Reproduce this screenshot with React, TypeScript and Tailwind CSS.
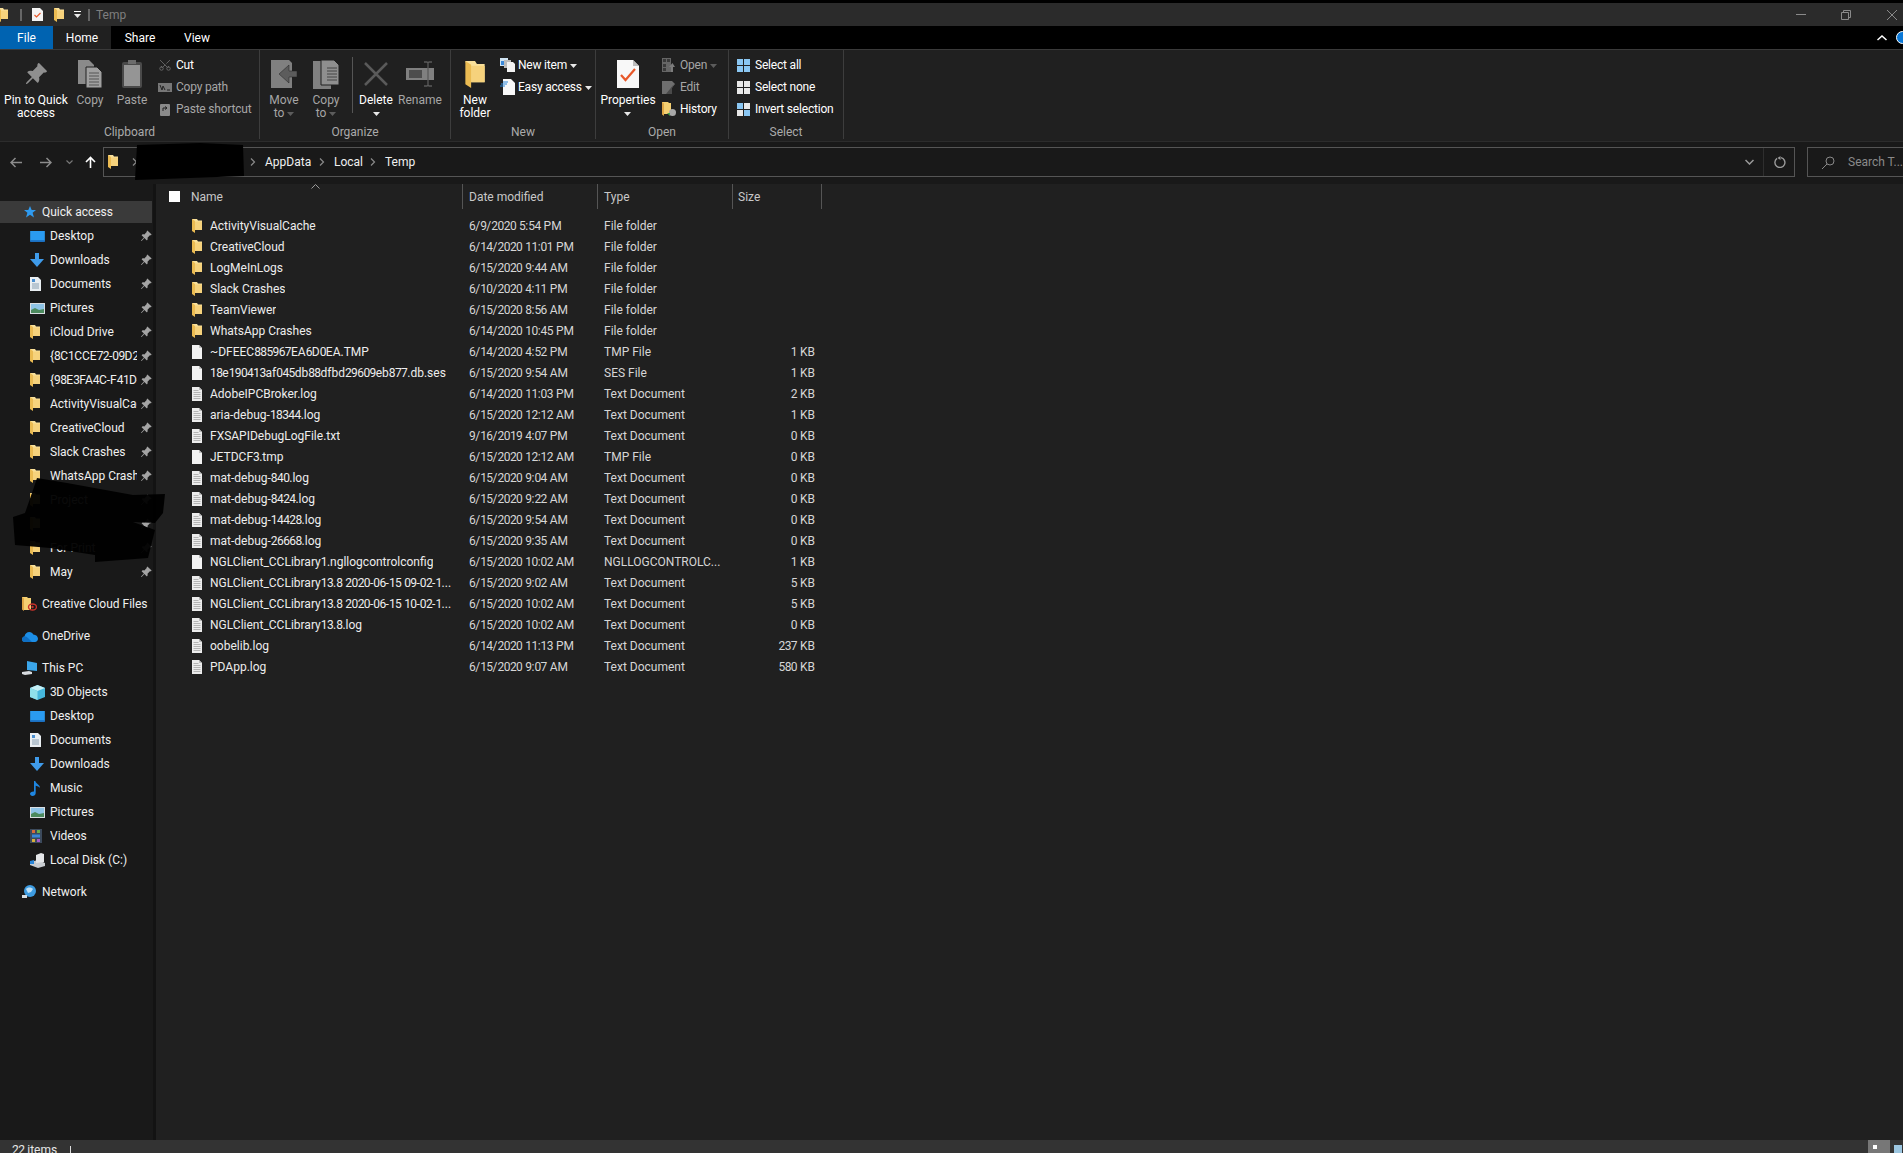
import React from "react";
import { BsPinAngleFill } from "react-icons/bs";
import { Scissors } from "lucide-react";

type FileRow = {
  name: string;
  date: string;
  type: string;
  size?: string;
  kind: "folder" | "blank" | "text";
};

const files: FileRow[] = [
  { name: "ActivityVisualCache", date: "6/9/2020 5:54 PM", type: "File folder", kind: "folder" },
  { name: "CreativeCloud", date: "6/14/2020 11:01 PM", type: "File folder", kind: "folder" },
  { name: "LogMeInLogs", date: "6/15/2020 9:44 AM", type: "File folder", kind: "folder" },
  { name: "Slack Crashes", date: "6/10/2020 4:11 PM", type: "File folder", kind: "folder" },
  { name: "TeamViewer", date: "6/15/2020 8:56 AM", type: "File folder", kind: "folder" },
  { name: "WhatsApp Crashes", date: "6/14/2020 10:45 PM", type: "File folder", kind: "folder" },
  { name: "~DFEEC885967EA6D0EA.TMP", date: "6/14/2020 4:52 PM", type: "TMP File", size: "1 KB", kind: "blank" },
  { name: "18e190413af045db88dfbd29609eb877.db.ses", date: "6/15/2020 9:54 AM", type: "SES File", size: "1 KB", kind: "blank" },
  { name: "AdobeIPCBroker.log", date: "6/14/2020 11:03 PM", type: "Text Document", size: "2 KB", kind: "text" },
  { name: "aria-debug-18344.log", date: "6/15/2020 12:12 AM", type: "Text Document", size: "1 KB", kind: "text" },
  { name: "FXSAPIDebugLogFile.txt", date: "9/16/2019 4:07 PM", type: "Text Document", size: "0 KB", kind: "text" },
  { name: "JETDCF3.tmp", date: "6/15/2020 12:12 AM", type: "TMP File", size: "0 KB", kind: "blank" },
  { name: "mat-debug-840.log", date: "6/15/2020 9:04 AM", type: "Text Document", size: "0 KB", kind: "text" },
  { name: "mat-debug-8424.log", date: "6/15/2020 9:22 AM", type: "Text Document", size: "0 KB", kind: "text" },
  { name: "mat-debug-14428.log", date: "6/15/2020 9:54 AM", type: "Text Document", size: "0 KB", kind: "text" },
  { name: "mat-debug-26668.log", date: "6/15/2020 9:35 AM", type: "Text Document", size: "0 KB", kind: "text" },
  { name: "NGLClient_CCLibrary1.ngllogcontrolconfig", date: "6/15/2020 10:02 AM", type: "NGLLOGCONTROLC...", size: "1 KB", kind: "blank" },
  { name: "NGLClient_CCLibrary13.8 2020-06-15 09-02-1...", date: "6/15/2020 9:02 AM", type: "Text Document", size: "5 KB", kind: "text" },
  { name: "NGLClient_CCLibrary13.8 2020-06-15 10-02-1...", date: "6/15/2020 10:02 AM", type: "Text Document", size: "5 KB", kind: "text" },
  { name: "NGLClient_CCLibrary13.8.log", date: "6/15/2020 10:02 AM", type: "Text Document", size: "0 KB", kind: "text" },
  { name: "oobelib.log", date: "6/14/2020 11:13 PM", type: "Text Document", size: "237 KB", kind: "text" },
  { name: "PDApp.log", date: "6/15/2020 9:07 AM", type: "Text Document", size: "580 KB", kind: "text" },
];

// digits in the screenshot sit on a 6px grid, Roboto's are wider
const Digits = ({ text, spacing = "tracking-[-0.6px]" }: { text: string; spacing?: string }) => (
  <>
    {text.split(/(\d+)/).map((part, i) =>
      i % 2 === 1 ? (
        <span key={i} className={spacing}>
          {part}
        </span>
      ) : (
        part
      ),
    )}
  </>
);

const Folder = ({ className = "w-[10px] h-[14px]" }: { className?: string }) => (
  <svg viewBox="0 0 10 14" className={className}>
    <path d="M0 0h5l1 1.500h4V11H3z" fill="#f9e09a" />
    <path d="M3 2.500h7V11H3z" fill="#f6d27c" />
    <path d="M0 0l3 2v12l-3-2z" fill="#ebbb52" />
  </svg>
);

const BlankDoc = () => (
  <svg viewBox="0 0 10 14" className="w-[10px] h-[14px]">
    <path d="M0 0H7L10 3V14H0z" fill="#f2f2f2" />
    <path d="M7 0V3H10z" fill="#c4c4c4" />
  </svg>
);

const TextDoc = () => (
  <svg viewBox="0 0 10 14" className="w-[10px] h-[14px]">
    <path d="M0 0H7L10 3V14H0z" fill="#ececec" />
    <path d="M7 0V3H10z" fill="#bdbdbd" />
    <path d="M1.500 3.500h5M1.500 5.500h7M1.500 7.500h7M1.500 9.500h7M1.500 11.500h7" stroke="#a6a6a6" strokeWidth="0.800" />
  </svg>
);

const Chevron = () => (
  <svg viewBox="0 0 6 8" className="w-[6px] h-[8px]">
    <path d="M1 0.500L4.500 4L1 7.500" fill="none" stroke="#8a8a8a" strokeWidth="1.200" />
  </svg>
);

const Caret = ({ dim = false }: { dim?: boolean }) => (
  <svg viewBox="0 0 7 4" className="w-[7px] h-[4px] inline-block">
    <path d="M0 0h7L3.500 4z" fill={dim ? "#5c5c5c" : "#e8e8e8"} />
  </svg>
);

const Pin = () => <BsPinAngleFill className="w-[12px] h-[12px] text-[#a4a4a4]" />;

const DesktopIcon = () => (
  <svg viewBox="0 0 16 12" className="w-[15px] h-[11px]">
    <rect width="16" height="11" fill="#2a9bf0" />
    <rect y="10" width="16" height="2" fill="#1b6fc0" />
  </svg>
);
const DownloadIcon = () => (
  <svg viewBox="0 0 14 14" className="w-[14px] h-[14px]">
    <path d="M5 0h4v6h5l-7 8-7-8h5z" fill="#3f9bea" />
  </svg>
);
const DocumentsIcon = () => (
  <svg viewBox="0 0 11 14" className="w-[11px] h-[14px]">
    <path d="M0 0H8L11 3V14H0z" fill="#e9eef2" />
    <path d="M2 2h3v3H2z" fill="#4a8fd0" />
    <path d="M2 7h7M2 9h7M2 11h7" stroke="#8aa0b2" />
  </svg>
);
const PicturesIcon = () => (
  <svg viewBox="0 0 15 11" className="w-[15px] h-[11px]">
    <rect width="15" height="11" fill="#d9dee2" />
    <rect x="1" y="1" width="13" height="9" fill="#8ec3e6" />
    <path d="M1 7l4-2 4 2 5-1v4H1z" fill="#4c8a5e" />
  </svg>
);
const StarIcon = () => (
  <svg viewBox="0 0 12 12" className="ml-[2px] w-[12px] h-[12px]">
    <path d="M6 0l1.700 4H12L8.600 6.800 10 11.500 6 8.800 2 11.500l1.400-4.700L0 4h4.300z" fill="#2f9bf0" />
  </svg>
);
const CubeIcon = () => (
  <svg viewBox="0 0 15 15" className="w-[15px] h-[15px]">
    <path d="M7.500 0L15 3v9l-7.500 3L0 12V3z" fill="#46b7dc" />
    <path d="M7.500 0L15 3 7.500 6 0 3z" fill="#c6f0f6" />
    <path d="M0 3l7.500 3v9L0 12z" fill="#8fe0ea" />
  </svg>
);
const MusicIcon = () => (
  <svg viewBox="0 0 11 15" className="w-[11px] h-[15px]">
    <path d="M4 0h1.300c.5 3 4.700 3.500 4.700 7-1-1.500-3-2-4.300-2.300V12c0 1.700-1.500 3-3.200 3C1 15 0 14 0 12.800 0 11.300 1.700 10.300 4 10.500z" fill="#1f86e0" />
  </svg>
);
const VideosIcon = () => (
  <svg viewBox="0 0 12 14" className="w-[12px] h-[14px]">
    <rect width="12" height="14" fill="#3c4a5c" />
    <rect x="2" y="1" width="3" height="3" fill="#d86a3a" />
    <rect x="7" y="1" width="3" height="3" fill="#6ab04a" />
    <rect x="2" y="5.500" width="8" height="3" fill="#3a88d8" />
    <rect x="2" y="10" width="3" height="3" fill="#d8b03a" />
    <rect x="7" y="10" width="3" height="3" fill="#a85ac8" />
  </svg>
);
const DiskIcon = () => (
  <svg viewBox="0 0 15 15" className="w-[15px] h-[15px]">
    <path d="M0 9l8-2 7 3v3l-7 2-8-3z" fill="#c8ccd0" />
    <path d="M6 2l5-2 3 1v8l-8 1z" fill="#e4e6e8" />
    <path d="M0 8l4-1v4H0z" fill="#2a86d8" />
  </svg>
);
const CloudIcon = () => (
  <svg viewBox="0 0 16 11" className="w-[16px] h-[11px]">
    <path d="M3 11C1 11 0 9.700 0 8.300 0 6.800 1 5.700 2.500 5.500 3 2.500 5 1 7.300 1c1.800 0 3.300 1 4 2.500C14 3.600 16 5.500 16 7.800 16 9.700 14.600 11 13 11z" fill="#1c8ee6" />
    <path d="M3 11C1 11 0 9.700 0 8.300 0 6.800 1 5.700 2.500 5.500 4 5.200 5 6 6 7l4 4z" fill="#0f6fc4" />
  </svg>
);
const PcIcon = () => (
  <svg viewBox="0 0 16 14" className="w-[16px] h-[14px]">
    <path d="M5 0l10 2v8l-10-1z" fill="#3ba6ea" />
    <path d="M0 11l7-1 3 1v2l-7 1-3-1z" fill="#d8dce0" />
  </svg>
);
const NetworkIcon = () => (
  <svg viewBox="0 0 14 14" className="w-[14px] h-[14px]">
    <circle cx="8" cy="6" r="6" fill="#3d9be0" />
    <path d="M4 4c2-2 5-2 7 0l-2 3-3 1z" fill="#bfe0f6" />
    <path d="M0 10h5v3H0z" fill="#d8dce0" />
  </svg>
);
const CcIcon = () => (
  <svg viewBox="0 0 15 14" className="w-[15px] h-[14px]">
    <path d="M0 0h5l1 1h3v12H2l-2-1z" fill="#f4cf72" />
    <path d="M0 0l2 1.500V14l-2-1.500z" fill="#dfa645" />
    <ellipse cx="10.500" cy="10" rx="4" ry="3" fill="none" stroke="#c8322a" strokeWidth="1.400" />
    <circle cx="10.500" cy="10" r="1.200" fill="#c8322a" />
  </svg>
);

type NavRow = { label: string; icon: React.ReactNode; pinned?: boolean };

const quick: NavRow[] = [
  { label: "Desktop", icon: <DesktopIcon />, pinned: true },
  { label: "Downloads", icon: <DownloadIcon />, pinned: true },
  { label: "Documents", icon: <DocumentsIcon />, pinned: true },
  { label: "Pictures", icon: <PicturesIcon />, pinned: true },
  { label: "iCloud Drive", icon: <Folder />, pinned: true },
  { label: "{8C1CCE72-09D2-4F", icon: <Folder />, pinned: true },
  { label: "{98E3FA4C-F41D-4A", icon: <Folder />, pinned: true },
  { label: "ActivityVisualCache", icon: <Folder />, pinned: true },
  { label: "CreativeCloud", icon: <Folder />, pinned: true },
  { label: "Slack Crashes", icon: <Folder />, pinned: true },
  { label: "WhatsApp Crashes", icon: <Folder />, pinned: true },
  { label: "Project", icon: <Folder />, pinned: true },
  { label: "", icon: <Folder />, pinned: true },
  { label: "For Print", icon: <Folder />, pinned: true },
  { label: "May", icon: <Folder />, pinned: true },
];

const pcItems: NavRow[] = [
  { label: "3D Objects", icon: <CubeIcon /> },
  { label: "Desktop", icon: <DesktopIcon /> },
  { label: "Documents", icon: <DocumentsIcon /> },
  { label: "Downloads", icon: <DownloadIcon /> },
  { label: "Music", icon: <MusicIcon /> },
  { label: "Pictures", icon: <PicturesIcon /> },
  { label: "Videos", icon: <VideosIcon /> },
  { label: "Local Disk (C:)", icon: <DiskIcon /> },
];

const ChildRow = ({ row }: { row: NavRow }) => (
  <div className="flex h-6 items-center pl-[30px]">
    <span className="flex w-[20px] shrink-0 items-center justify-start">{row.icon}</span>
    <span className={`overflow-hidden whitespace-nowrap text-[#f0f0f0] ${row.pinned ? "w-[87px]" : "w-[95px]"}`}>
      <Digits text={row.label} />
    </span>
    {row.pinned && <span className="ml-[3px]"><Pin /></span>}
  </div>
);

const RootRow = ({ icon, label, active }: { icon: React.ReactNode; label: string; active?: boolean }) => (
  <div className="flex h-6 items-center">
    <div className={`flex h-[22px] w-[152px] items-center pl-[22px] ${active ? "bg-[#3a3a3a]" : ""}`}>
      <span className="flex w-[20px] shrink-0 items-center">{icon}</span>
      <span className="whitespace-nowrap text-[#f0f0f0]">{label}</span>
    </div>
  </div>
);

const BigButton = ({
  width,
  icon,
  lines,
  dim,
  caret,
}: {
  width: string;
  icon: React.ReactNode;
  lines: React.ReactNode[];
  dim?: boolean;
  caret?: boolean;
}) => (
  <div className={`flex flex-col items-center ${width}`}>
    <div className="flex h-[40px] items-center justify-center">{icon}</div>
    <div className={`flex flex-col items-center whitespace-nowrap leading-[13px] ${dim ? "text-[#a6a6a6]" : "text-white"}`}>
      {lines.map((l, i) => (
        <span key={i} className="h-[13px]">
          {l}
        </span>
      ))}
      {caret && (
        <span className="flex h-[13px] items-center">
          <Caret />
        </span>
      )}
    </div>
  </div>
);

const SmallItem = ({ icon, label, dim }: { icon: React.ReactNode; label: React.ReactNode; dim?: boolean }) => (
  <div className="flex h-[22px] items-center">
    <span className="flex w-[18px] shrink-0 items-center">{icon}</span>
    <span className={`whitespace-nowrap tracking-[-0.2px] ${dim ? "text-[#a6a6a6]" : "text-white"}`}>{label}</span>
  </div>
);

const Group = ({ width, label, children }: { width: string; label: string; children: React.ReactNode }) => (
  <div className={`flex h-[89px] flex-col border-r border-[#3d3d3d] pt-[4px] ${width}`}>
    <div className="flex h-[72px]">{children}</div>
    <div className="text-center leading-[14px] text-[#ababab]">{label}</div>
  </div>
);

const Tiles = ({ colors }: { colors: string[] }) => (
  <div className="grid h-[13px] w-[13px] grid-cols-2 gap-[1px]">
    {colors.map((c, i) => (
      <div key={i} className={c} />
    ))}
  </div>
);

export default function App() {
  return (
    <div className="relative flex h-[1153px] w-[1903px] flex-col overflow-hidden bg-[#202020] text-[12px] [font-family:Roboto,sans-serif]">
      {/* title bar */}
      <div className="h-[3px] bg-black" />
      <div className="flex h-[23px] items-center bg-[#2b2b2b] text-[#7f7f7f]">
        <div className="-ml-[2px] w-[22px]">
          <Folder />
        </div>
        <div className="h-[12px] w-[2px] border-x border-[#666]" />
        <div className="ml-[10px] w-[22px]">
          <svg viewBox="0 0 11 13" className="h-[13px] w-[11px]">
            <path d="M0 0H8L11 3V13H0z" fill="#f4f4f4" />
            <path d="M2.500 7l2 2 4-4" fill="none" stroke="#e8582a" strokeWidth="1.200" />
          </svg>
        </div>
        <Folder />
        <div className="ml-[7px] flex w-[12px] flex-col items-center gap-[2px]">
          <div className="h-[1px] w-[7px] bg-white" />
          <Caret />
        </div>
        <div className="ml-[5px] h-[12px] w-[2px] border-x border-[#666]" />
        <span className="ml-[6px]">Temp</span>
        <div className="ml-auto flex items-center text-[#8a8a8a]">
          <div className="mr-[35px] h-[1px] w-[10px] bg-[#8a8a8a]" />
          <svg viewBox="0 0 10 10" className="mr-[36px] h-[10px] w-[10px]" fill="none" stroke="#8a8a8a">
            <path d="M0.500 2.500h7v7h-7zM2.500 2.500v-2h7v7h-2" />
          </svg>
          <svg viewBox="0 0 10 10" className="mr-[6px] h-[10px] w-[10px]" stroke="#8a8a8a">
            <path d="M0 0l10 10M10 0L0 10" />
          </svg>
        </div>
      </div>

      {/* tabs */}
      <div className="flex h-[23px] items-stretch bg-black text-white">
        <div className="flex w-[53px] items-center justify-center bg-[#0063b1]">File</div>
        <div className="flex w-[58px] items-center justify-center bg-[#202020]">Home</div>
        <div className="flex w-[58px] items-center justify-center">Share</div>
        <div className="flex w-[56px] items-center justify-center">View</div>
        <div className="ml-auto flex items-center">
          <svg viewBox="0 0 10 6" className="mr-[9px] h-[6px] w-[10px]">
            <path d="M0.500 5L5 1l4.500 4" fill="none" stroke="#fff" strokeWidth="1.500" />
          </svg>
          <div className="-mr-[6px] h-[13px] w-[13px] rounded-full border border-white bg-[#0a78d7]" />
        </div>
      </div>

      {/* ribbon */}
      <div className="flex h-[92px] border-t border-[#3a3a3a] bg-[#202020]">
        <Group width="w-[260px]" label="Clipboard">
          <BigButton
            width="w-[72px]"
            lines={["Pin to Quick", "access"]}
            icon={<BsPinAngleFill className="h-[24px] w-[24px] text-[#8f8f8f]" />}
          />
          <BigButton
            width="w-[36px]"
            dim
            lines={["Copy"]}
            icon={
              <svg viewBox="0 0 24 28" className="h-[28px] w-[24px]">
                <path d="M0 0h11l5 5v19H0z" fill="#8a8a8a" />
                <path d="M8 7h11l5 5v16H8z" fill="#a0a0a0" stroke="#202020" />
                <path d="M11 13h10M11 16h10M11 19h10M11 22h10M11 25h10" stroke="#555" />
              </svg>
            }
          />
          <BigButton
            width="w-[48px]"
            dim
            lines={["Paste"]}
            icon={
              <svg viewBox="0 0 20 28" className="h-[28px] w-[20px]">
                <rect y="2" width="20" height="26" rx="2" fill="#4a4a4a" />
                <rect x="2" y="5" width="16" height="21" fill="#959595" />
                <rect x="6" y="0" width="8" height="4" fill="#6c6c6c" />
              </svg>
            }
          />
          <div className="ml-[2px] flex flex-col">
            <SmallItem
              dim
              icon={<Scissors className="h-[14px] w-[14px] -rotate-90 text-[#7d7d7d]" strokeWidth={1.200} />}
              label={<span className="text-white">Cut</span>}
            />
            <SmallItem
              dim
              icon={
                <svg viewBox="0 0 14 9" className="h-[9px] w-[14px]">
                  <rect width="14" height="9" fill="#777" />
                  <path d="M2 2l2 5 1-4 2 4M9 7h3" stroke="#222" fill="none" />
                </svg>
              }
              label="Copy path"
            />
            <SmallItem
              dim
              icon={
                <svg viewBox="0 0 10 13" className="ml-[2px] h-[13px] w-[10px]">
                  <rect y="1" width="10" height="12" rx="1" fill="#8a8a8a" />
                  <path d="M3 8V5h4M5 3.500L7 5 5 6.500" stroke="#222" fill="none" />
                </svg>
              }
              label="Paste shortcut"
            />
          </div>
        </Group>

        <Group width="w-[191px]" label="Organize">
          <BigButton
            width="w-[48px]"
            dim
            lines={[
              "Move",
              <span key="m">
                to <Caret dim />
              </span>,
            ]}
            icon={
              <svg viewBox="0 0 26 28" className="h-[28px] w-[26px]">
                <path d="M0 0h18l3 3v25H0z" fill="#808080" />
                <path d="M26 11v6h-8v6L8 14l10-9v6z" fill="#5c5c5c" stroke="#202020" strokeWidth="0.500" />
              </svg>
            }
          />
          <BigButton
            width="w-[36px]"
            dim
            lines={[
              "Copy",
              <span key="c">
                to <Caret dim />
              </span>,
            ]}
            icon={
              <svg viewBox="0 0 26 29" className="h-[29px] w-[26px]">
                <path d="M0 1h18v28H0z" fill="#808080" />
                <path d="M8 0h13l5 5v20H8z" fill="#8f8f8f" stroke="#202020" />
                <path d="M14 8h10M14 11h10M14 14h10M14 17h10M14 20h10" stroke="#444" />
              </svg>
            }
          />
          <div className="ml-[8px] mt-[3px] h-[56px] w-[1px] bg-[#555]" />
          <BigButton
            width="w-[46px]"
            caret
            lines={["Delete"]}
            icon={
              <svg viewBox="0 0 24 24" className="h-[24px] w-[24px]">
                <path d="M1 1l22 22M23 1L1 23" stroke="#5a5a5a" strokeWidth="2.500" />
              </svg>
            }
          />
          <BigButton
            width="w-[42px]"
            dim
            lines={["Rename"]}
            icon={
              <svg viewBox="0 0 28 26" className="h-[26px] w-[28px]">
                <rect y="7" width="28" height="12" fill="#808080" />
                <rect x="3" y="9" width="13" height="8" fill="#4d4d4d" />
                <path d="M18 1h3l1 1 1-1h3M22 2v22M18 25h3l1-1 1 1h3" stroke="#5a5a5a" fill="none" strokeWidth="1.300" />
              </svg>
            }
          />
        </Group>

        <Group width="w-[145px]" label="New">
          <BigButton
            width="w-[48px]"
            lines={["New", "folder"]}
            icon={<Folder className="h-[27px] w-[20px]" />}
          />
          <div className="ml-[1px] flex flex-col">
            <SmallItem
              icon={
                <svg viewBox="0 0 15 14" className="h-[14px] w-[15px]">
                  <rect width="8" height="8" fill="#cfe3f2" />
                  <rect x="1" y="3" width="3" height="4" fill="#3a88d8" />
                  <rect x="4" y="2" width="7" height="8" fill="#bcbcbc" />
                  <path d="M7 4h6l2 2v8H7z" fill="#f2f2f2" />
                </svg>
              }
              label={
                <span>
                  New item <Caret />
                </span>
              }
            />
            <SmallItem
              icon={
                <svg viewBox="0 0 15 16" className="h-[16px] w-[15px]">
                  <path d="M3 0h8l4 4v12H3z" fill="#f8f8f8" />
                  <path d="M3 3h5M1 5h6M0 7h5" stroke="#2a86d8" />
                </svg>
              }
              label={
                <span>
                  Easy access <Caret />
                </span>
              }
            />
          </div>
        </Group>

        <Group width="w-[133px]" label="Open">
          <BigButton
            width="w-[64px]"
            caret
            lines={["Properties"]}
            icon={
              <svg viewBox="0 0 22 28" className="h-[28px] w-[22px]">
                <path d="M0 0H16L22 6V28H0z" fill="#f8f8f8" />
                <path d="M16 0V6H22z" fill="#bdbdbd" />
                <path d="M4 15l4.500 5L18 9" fill="none" stroke="#e8582a" strokeWidth="2.200" />
              </svg>
            }
          />
          <div className="ml-[2px] flex flex-col">
            <SmallItem
              dim
              icon={
                <svg viewBox="0 0 13 14" className="h-[14px] w-[13px]">
                  <rect width="9" height="14" fill="#666" />
                  <path d="M1 1h3v3H1zM5 1h3v3H5zM1 6h3v3H1zM1 10h3v3H1z" fill="#3a3a3a" />
                  <path d="M9 14V9H7l3.500-4L13 9h-2v5z" fill="#7c7c7c" />
                </svg>
              }
              label={
                <span>
                  Open <Caret dim />
                </span>
              }
            />
            <SmallItem
              dim
              icon={
                <svg viewBox="0 0 13 13" className="h-[13px] w-[13px]">
                  <path d="M0 0H10L13 3 5 13H0z" fill="#6e6e6e" />
                  <path d="M12 3L4 13H10V7z" fill="#4a4a4a" />
                </svg>
              }
              label="Edit"
            />
            <SmallItem
              icon={
                <svg viewBox="0 0 14 14" className="h-[14px] w-[14px]">
                  <path d="M0 0h6l1 1h2v11H2l-2-1z" fill="#f4cf72" />
                  <path d="M0 0l2 1.500V14l-2-1.500z" fill="#dfa645" />
                  <circle cx="10.500" cy="10.500" r="3.500" fill="#a8a8a8" />
                  <path d="M5 11h3v3z" fill="#4aa04a" />
                </svg>
              }
              label="History"
            />
          </div>
        </Group>

        <Group width="w-[115px]" label="Select">
          <div className="ml-[8px] flex flex-col">
            <SmallItem
              icon={<Tiles colors={["bg-[#8ac6f2]", "bg-[#8ac6f2]", "bg-[#8ac6f2]", "bg-[#8ac6f2]"]} />}
              label="Select all"
            />
            <SmallItem
              icon={<Tiles colors={["bg-[#e8e8e8]", "bg-[#e8e8e8]", "bg-[#e8e8e8]", "bg-[#e8e8e8]"]} />}
              label="Select none"
            />
            <SmallItem
              icon={<Tiles colors={["bg-[#8ac6f2]", "bg-[#e8e8e8]", "bg-[#e8e8e8]", "bg-[#8ac6f2]"]} />}
              label="Invert selection"
            />
          </div>
        </Group>
      </div>

      {/* address row */}
      <div className="flex h-[43px] items-start border-t border-[#2c2c2c] bg-[#191919] pt-[5px]">
        <div className="flex h-[30px] w-[32px] shrink-0 items-center justify-center">
          <svg viewBox="0 0 12 11" className="h-[11px] w-[12px]">
            <path d="M12 5.500H1.500M5.500 1L1 5.500 5.500 10" fill="none" stroke="#8c8c8c" strokeWidth="1.500" />
          </svg>
        </div>
        <div className="flex h-[30px] w-[28px] shrink-0 items-center justify-center">
          <svg viewBox="0 0 12 11" className="h-[11px] w-[12px]">
            <path d="M0 5.500h10.500M6.500 1L11 5.500 6.500 10" fill="none" stroke="#8c8c8c" strokeWidth="1.500" />
          </svg>
        </div>
        <div className="flex h-[30px] w-[18px] shrink-0 items-center justify-center">
          <svg viewBox="0 0 7 5" className="h-[5px] w-[7px]">
            <path d="M0.500 0.500L3.500 3.500l3-3" fill="none" stroke="#777" strokeWidth="1.200" />
          </svg>
        </div>
        <div className="flex h-[30px] w-[25px] shrink-0 items-center justify-center">
          <svg viewBox="0 0 11 12" className="h-[12px] w-[11px]">
            <path d="M5.500 12V1.500M1 6l4.500-4.500L10 6" fill="none" stroke="#fff" strokeWidth="1.600" />
          </svg>
        </div>
        <div className="flex h-[30px] w-[1692px] shrink-0 items-center border border-[#555] text-[#f0f0f0]">
          <div className="ml-[4px] w-[23px]">
            <Folder />
          </div>
          <div className="flex w-[119px] items-center">
            <span className="ml-[1px]">
              <Chevron />
            </span>
          </div>
          <span className="flex w-[6px] justify-center">
            <Chevron />
          </span>
          <span className="ml-[9px] w-[51px]">AppData</span>
          <span className="flex w-[12px] justify-center">
            <Chevron />
          </span>
          <span className="ml-[6px] w-[33px]">Local</span>
          <span className="flex w-[12px] justify-center">
            <Chevron />
          </span>
          <span className="ml-[6px]">Temp</span>
          <div className="ml-auto flex h-full items-center">
            <svg viewBox="0 0 9 6" className="mr-[9px] h-[6px] w-[9px]">
              <path d="M0.500 1L4.500 5l4-4" fill="none" stroke="#9a9a9a" strokeWidth="1.500" />
            </svg>
            <div className="h-full w-[1px] bg-[#2e2e2e]" />
            <svg viewBox="0 0 12 12" className="ml-[10px] mr-[8px] h-[12px] w-[12px]">
              <path d="M7 1.600A5 5 0 1 1 3 2.400" fill="none" stroke="#9a9a9a" strokeWidth="1.400" />
              <path d="M6.500 0v4l-3-2z" fill="#9a9a9a" />
            </svg>
          </div>
        </div>
        <div className="ml-[12px] flex h-[30px] w-[120px] shrink-0 items-center border border-[#555] pl-[14px] text-[#8a8a8a]">
          <svg viewBox="0 0 13 13" className="h-[13px] w-[13px]">
            <circle cx="8" cy="5" r="4" fill="none" stroke="#888" />
            <path d="M5 8l-5 5" stroke="#888" />
          </svg>
          <span className="ml-[13px] whitespace-nowrap">Search T...</span>
        </div>
      </div>

      {/* body */}
      <div className="flex min-h-0 flex-1">
        <div className="w-[153px] shrink-0 bg-[#191919] pt-[16px]">
          <RootRow active icon={<StarIcon />} label="Quick access" />
          {quick.map((row, i) => (
            <ChildRow key={i} row={row} />
          ))}
          <div className="h-2" />
          <RootRow icon={<CcIcon />} label="Creative Cloud Files" />
          <div className="h-2" />
          <RootRow icon={<CloudIcon />} label="OneDrive" />
          <div className="h-2" />
          <RootRow icon={<PcIcon />} label="This PC" />
          {pcItems.map((row, i) => (
            <ChildRow key={i} row={row} />
          ))}
          <div className="h-2" />
          <RootRow icon={<NetworkIcon />} label="Network" />
        </div>
        <div className="w-[3px] shrink-0 bg-[#131313]" />
        <div className="min-w-0 flex-1 bg-[#202020]">
          {/* column headers */}
          <div className="relative flex h-[25px] items-stretch text-[#c8c8c8]">
            <div className="flex w-[307px] items-center border-r border-[#555] pl-[13px]">
              <div className="h-[11px] w-[11px] bg-white" />
              <span className="ml-[11px]">Name</span>
            </div>
            <div className="flex w-[135px] items-center border-r border-[#555] pl-[6px]">Date modified</div>
            <div className="flex w-[135px] items-center border-r border-[#555] pl-[6px]">Type</div>
            <div className="flex w-[89px] items-center border-r border-[#555] pl-[5px]">Size</div>
            <svg viewBox="0 0 9 5" className="absolute left-[155px] top-0 h-[5px] w-[9px]">
              <path d="M0.500 4.500L4.500 0.500l4 4" fill="none" stroke="#9a9a9a" />
            </svg>
          </div>
          {/* file rows */}
          <div className="mt-[6px]">
            {files.map((f) => (
              <div key={f.name} className="flex h-[21px] items-center text-[#ededed]">
                <div className="flex w-[307px] items-center pl-[36px]">
                  <span className="flex w-[18px] shrink-0 items-center">
                    {f.kind === "folder" ? <Folder /> : f.kind === "blank" ? <BlankDoc /> : <TextDoc />}
                  </span>
                  <span className="overflow-hidden whitespace-nowrap">
                    <Digits text={f.name} />
                  </span>
                </div>
                <div className="w-[135px] pl-[6px] text-[#d6d6d6]">
                  <Digits text={f.date} spacing="tracking-[-0.55px]" />
                </div>
                <div className="w-[135px] pl-[6px] text-[#d6d6d6]">{f.type}</div>
                <div className="w-[89px] pr-[7px] text-right text-[#d6d6d6]">
                  {f.size && <Digits text={f.size} />}
                </div>
              </div>
            ))}
          </div>
        </div>
      </div>

      {/* status bar */}
      <div className="flex h-[13px] shrink-0 items-start bg-[#333333] text-[#e6e6e6]">
        <span className="ml-[12px] mt-[3px] leading-[14px]">
          <Digits text="22 items" />
        </span>
        <div className="ml-[13px] mt-[6px] h-[8px] w-[1px] bg-[#dcdcdc]" />
        <div className="ml-auto mr-[1px] flex">
          <div className="h-[13px] w-[22px] bg-[#777] pl-[5px] pt-[5px]">
            <div className="h-[4px] w-[4px] bg-white" />
          </div>
          <div className="ml-[4px] mt-[5px] h-[8px] w-[8px] bg-[#9cc6e0]" />
        </div>
      </div>

      {/* black marker strokes over the address bar and the sidebar */}
      <svg className="pointer-events-none absolute left-0 top-0 h-[600px] w-[260px]" viewBox="0 0 260 600">
        <path d="M137 145L200 143 243 145 244 176 190 178 135 180z" fill="#000" />
        <path
          d="M37 478L67 483 133 495 165 494 163 513 155 523 133 522 155 530 148 558 95 562 95 555 50 548 15 545 13 517 25 513 33 490z"
          fill="#000"
          fillOpacity="0.96"
        />
      </svg>
    </div>
  );
}
